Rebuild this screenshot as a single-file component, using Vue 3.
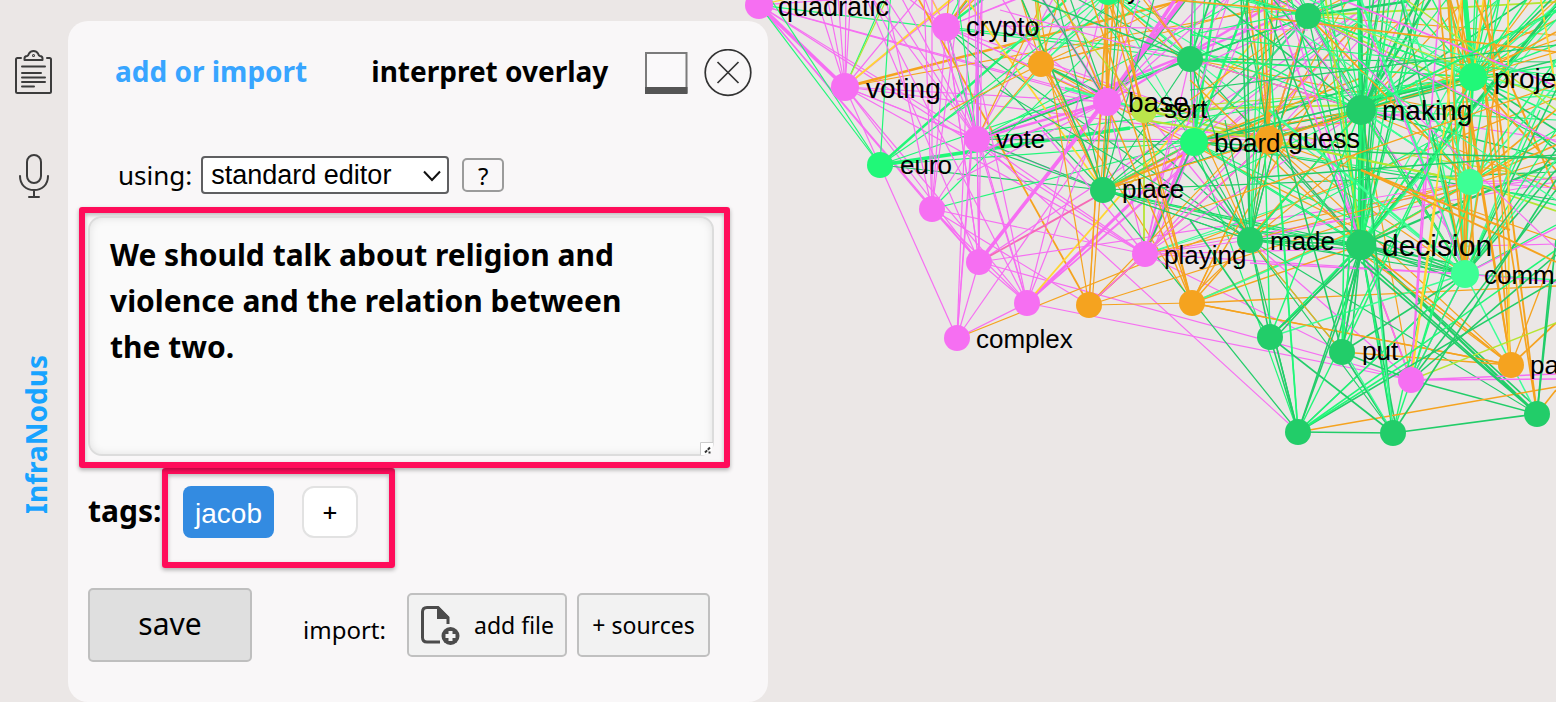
<script setup>
import { ref } from 'vue'

const text = ref('We should talk about religion and violence and the relation between the two.')
const editor = ref('standard editor')

const P = '#f66ff2'
const O = '#f5a31f'
const G = '#22cd69'
const B = '#20f878'
const L = '#3dff95'
const Y = '#ffd633'
const W = '#b5e532'

const nodes = [
  [759, 5, 14, P, 'quadratic', 27, 778, 16],
  [946, 27, 14, P, 'crypto', 27, 966, 36],
  [845, 87, 14, P, 'voting', 28, 866, 98],
  [880, 165, 13, B, 'euro', 26, 900, 174],
  [977, 139, 13, P, 'vote', 26, 996, 148],
  [932, 209, 13, P],
  [979, 262, 13, P],
  [1027, 303, 13, P],
  [957, 338, 13, P, 'complex', 26, 976, 348],
  [1041, 64, 13, O],
  [1108, -8, 13, B, 'y', 26, 1127, -1],
  [1190, 59, 13, G],
  [1144, 110, 13, '#bbe54b', 'sort', 26, 1164, 118],
  [1107, 102, 14, P, 'base', 28, 1128, 112],
  [1269, 140, 14, O, 'guess', 27, 1288, 148],
  [1194, 142, 14, B, 'board', 26, 1214, 152],
  [1103, 190, 13, G, 'place', 26, 1122, 198],
  [1145, 254, 13, P, 'playing', 26, 1164, 264],
  [1089, 305, 13, O],
  [1192, 303, 13, O],
  [1250, 240, 13, G, 'made', 26, 1270, 250],
  [1361, 245, 15, G, 'decision', 30, 1382, 256],
  [1361, 110, 15, G, 'making', 28, 1382, 120],
  [1308, 16, 13, G],
  [1473, 77, 14, B, 'project', 28, 1494, 88],
  [1470, 182, 13, L],
  [1465, 274, 14, L, 'community', 26, 1484, 284],
  [1270, 337, 13, G],
  [1342, 352, 13, G, 'put', 26, 1362, 360],
  [1411, 380, 13, P],
  [1511, 365, 13, O, 'part', 26, 1530, 374],
  [1298, 432, 13, G],
  [1393, 433, 13, G],
  [1537, 414, 13, G],
]

// Each fan: origin x, origin y, colour, stroke width, then the end points.
const fans = [
  [759, 5, P, 3, [845, 87]],
  [759, 5, P, 1, [977, 139, 1107, 102, 1145, 110, 932, 209, 979, 262, 1144, 254, 900, -5]],
  [759, 5, B, 1, [880, 165, 1190, 59]],
  [766, -8, B, 1, [880, 165]],
  [759, 5, Y, 1, [800, -4]],
  [845, 87, P, 1, [816, -4, 827, -4, 838, -4, 846, -4, 851, -4, 925, -10, 958, -4, 1107, 102, 977, 139, 957, 338, 1027, 303, 979, 262, 1269, 140, 1103, 190, 1145, 254]],
  [845, 87, B, 1, [888, -10]],
  [845, 87, W, 1, [891, -10]],
  [845, 87, Y, 1.5, [956, -5]],
  [845, 87, O, 2, [1230, -12]],
  [845, 87, O, 1, [1290, 5]],
  [880, 165, B, 1, [891, -10, 1150, -20, 1190, 59]],
  [880, 165, B, 2, [1066, 0]],
  [880, 165, B, 3, [1130, 128]],
  [880, 165, B, 1, [1473, 77, 1194, 142]],
  [880, 165, G, 1, [1103, 190]],
  [946, 27, P, 1, [900, -8, 930, -5, 976, -5, 1025, -5, 1040, -10, 977, 139, 932, 209, 1107, 102, 1194, 142, 979, 262, 1269, 140]],
  [946, 27, B, 2, [990, -6]],
  [946, 27, B, 1, [1250, 60, 962, -5, 977, 139]],
  [946, 27, G, 1, [1103, 190, 1250, 240, 976, -10]],
  [946, 27, O, 1.5, [974, -10]],
  [946, 27, O, 1, [950, -10, 984, -10]],
  [930, -4, Y, 1, [946, 27]],
  [960, -10, Y, 1.5, [1103, 190]],
  [918, -2, O, 1.5, [1089, 305]],
  [977, 139, P, 1, [870, -5, 884, -5, 900, -5, 924, -4, 978, -5, 1055, -5, 1107, 102, 1298, 432, 932, 209, 979, 262, 1027, 303, 1145, 254, 1360, 140]],
  [977, 139, P, 2, [1361, -15, 1107, 102]],
  [977, 139, G, 1, [1190, 59, 1103, 190, 1194, 142, 1308, 16]],
  [977, 139, B, 1, [957, -5, 1250, -5, 1473, 77]],
  [977, 139, O, 1, [1041, 5, 1041, 64]],
  [978, -5, '#c87bea', 1.5, [978, 126]],
  [932, 209, P, 1, [924, -5, 932, -5, 885, -5, 960, -5, 1027, 303, 1145, 254, 1089, 305, 979, 262]],
  [932, 209, B, 1, [1194, 142, 1140, 1]],
  [979, 262, P, 3, [1190, -8]],
  [979, 262, P, 1, [865, -5, 946, 27, 982, -5, 975, -5, 1411, 380, 1556, 177, 1027, 303, 1361, 10]],
  [979, 262, '#f66ab5', 1.5, [1194, 142]],
  [1027, 303, P, 2.5, [1194, 142]],
  [1027, 303, P, 1, [870, -5, 946, 27, 975, 60, 1105, -5, 1411, 380, 957, 338, 1270, 90, 1107, 102, 1380, -2]],
  [1027, 303, Y, 1.5, [1300, -12]],
  [957, 338, P, 1, [979, 262, 974, 120, 970, -5, 1130, 90, 982, -5]],
  [957, 338, O, 1, [1556, 98]],
  [1041, 64, O, 1, [1020, -5, 1035, -5, 1060, -5, 1107, 102, 1190, -5, 1310, -5, 1103, 190, 1192, 303, 1130, 40, 950, 110, 1269, 140]],
  [1041, 64, W, 1.5, [1037, -5]],
  [1041, 64, G, 2, [1110, 98]],
  [1041, 64, B, 1, [1120, -5]],
  [1041, 64, P, 1, [1000, -5, 1090, -5]],
  [1108, -8, L, 1, [1000, 52, 977, 139, 1107, 102, 1250, 80, 1308, 16, 1194, 142, 1361, 110, 1465, 274]],
  [1108, -8, B, 1, [1190, 59, 945, 120, 1360, 110]],
  [1108, -8, O, 1, [1107, 102, 1145, 110, 1269, 140, 1089, 305]],
  [1107, 102, P, 3, [1185, -5, 1178, -5]],
  [1107, 102, P, 2, [1040, -5, 1280, 0, 979, 152]],
  [1107, 102, P, 1, [1000, 20, 1060, -5, 1140, -5, 1210, -5, 1230, -5, 1145, 254, 1269, 140, 957, 180, 979, 262]],
  [1107, 102, G, 1, [1040, -5, 1103, 190, 1190, -5, 1256, 240, 1069, -5]],
  [1107, 102, O, 1.5, [1105, -5, 1114, -5]],
  [1107, 102, O, 1, [1092, 305, 1000, 54, 1360, 230]],
  [1190, 59, G, 1.5, [1193, -5, 1212, -5]],
  [1190, 59, G, 1, [1070, -5, 1103, 190, 1308, 16, 1361, 110, 1473, 77, 1556, 62, 1250, 240, 1194, 142, 1361, 245]],
  [1190, 59, P, 1, [1145, -5, 1145, 254, 1230, -5]],
  [1190, 59, O, 1, [1140, -5, 1361, 110, 1150, 5, 1473, 115]],
  [1144, 110, W, 1.5, [1144, 250, 1361, 105, 1269, 140]],
  [1144, 110, W, 1, [1050, -5, 1320, 95, 1556, 180]],
  [1144, 110, L, 2, [1065, 88]],
  [1144, 110, P, 1, [1060, 95, 1250, 240]],
  [1194, 142, B, 2, [1216, -5, 1250, -5, 1361, 245]],
  [1194, 142, B, 1, [1195, -5, 1205, -5, 1145, 254, 1308, 16, 1473, 77, 1361, 110, 1298, 432, 1465, 274, 1470, 182, 1100, 15]],
  [1194, 142, G, 1.5, [1361, 110, 1103, 190, 1361, 85, 1308, 16]],
  [1194, 142, G, 1, [1250, 240, 1361, 245, 1145, 254, 1556, 200]],
  [1194, 142, O, 1.5, [1103, 190, 1361, 120, 1361, 78]],
  [1194, 142, P, 2, [1145, 254]],
  [1194, 142, P, 1, [1152, 254, 1361, 10, 1260, -5, 1192, -5, 1430, 110]],
  [1103, 190, G, 1, [1119, -5, 1155, -5, 1361, 110, 1361, 245, 1298, 432, 1556, 172, 1250, 240, 1361, 260, 1465, 274, 1056, -5, 990, 150, 1308, 16]],
  [1103, 190, B, 1, [1194, 142, 1361, 20, 1361, 248]],
  [1103, 190, O, 2, [1269, 118]],
  [1103, 190, O, 1, [1045, 64, 1269, 140, 1124, -5]],
  [1103, 190, Y, 1, [1020, -5]],
  [1145, 254, P, 2.5, [1194, 130]],
  [1145, 254, P, 1, [1173, 120, 1230, -5, 1361, 110, 1465, 274, 1556, 244, 1342, 352, 1361, 20, 1042, 130, 1089, 305, 1556, 182]],
  [1145, 254, G, 1.5, [1194, 142]],
  [1145, 254, L, 1, [1361, 180, 1250, 222]],
  [1145, 254, O, 1, [1470, 182, 1269, 140, 1089, 305]],
  [1089, 305, O, 1, [1037, -5, 1107, -5, 1269, 140, 1556, 158, 1192, 303, 1361, 20]],
  [1089, 305, P, 1, [1269, 140]],
  [1192, 303, O, 1.2, [1107, -5, 1130, 60, 1060, -5, 1090, -5, 1269, 140, 1361, 20, 1361, 245, 1380, 90, 1556, 286, 1511, 365, 1361, 228]],
  [1192, 303, L, 1.5, [1361, 230]],
  [1269, 140, O, 1.5, [1247, -5, 1257, -5, 1264, -5, 1272, -5, 1308, 16, 1361, 110, 1473, 77]],
  [1269, 140, O, 1, [1350, -5, 1430, -5, 1192, 303, 1511, 365, 1465, 274, 1556, 240, 1250, 240, 1361, 245, 1556, 40, 1103, 190]],
  [1269, 140, P, 1, [1308, 16, 1400, -5, 1470, 182, 1361, 245, 1145, 254]],
  [1269, 140, G, 1, [1242, -5, 1361, 245, 1250, 240, 1361, 110]],
  [1269, 140, W, 1.5, [1144, 120, 1470, 182]],
  [1308, 16, G, 2, [1361, -3, 1243, -2, 1410, 1]],
  [1308, 16, G, 1, [1270, -5, 1281, -5, 1298, -5, 1318, -5, 1330, -5, 1361, 110, 1361, 245, 1250, 240, 1473, 77, 1465, 274, 1194, 142, 1556, 145, 1190, 59]],
  [1308, 16, P, 1, [1361, 110, 1194, 142, 1361, -5, 1190, 70]],
  [1308, 16, O, 1, [1269, 140, 1350, -5, 1470, 182, 1556, 35, 1240, -5, 1190, 100]],
  [1308, 16, W, 1.5, [1556, 2, 1470, 90]],
  [1308, 16, B, 1, [1220, -5, 1194, 142, 1361, 90, 1473, 77]],
  [1360, -5, G, 4, [1361, 110]],
  [1361, 110, G, 5, [1361, 245]],
  [1361, 110, B, 2, [1358, -5, 1358, 245, 1473, 77]],
  [1361, 110, G, 2, [1420, -5, 1433, -5]],
  [1361, 110, G, 1.3, [1374, -5, 1380, -5, 1250, 240, 1556, 60, 1556, 160, 1465, 274, 1342, 352, 1270, -5, 1210, -5, 1556, -20]],
  [1361, 110, B, 1, [1320, -5, 1340, -5, 1382, -5, 1400, -5, 1450, -5, 1556, 12, 1470, 182, 1393, 433, 1194, 190, 1194, 50, 1556, 120, 1504, -5]],
  [1361, 110, L, 1.2, [1465, 274, 1470, 182, 1300, -5, 1556, 95]],
  [1361, 110, O, 1, [1556, 190, 1465, 274, 1470, -5, 1250, 130, 1411, 380, 1556, 20]],
  [1361, 110, P, 1, [1556, 140, 1411, -5, 1470, 260, 1190, 59]],
  [1361, 245, G, 2.5, [1430, 160, 1560, 0]],
  [1361, 245, G, 2, [1537, 414, 1556, 162]],
  [1361, 245, G, 1.3, [1373, 80, 1385, -5, 1420, -5, 1260, -5, 1270, 337, 1276, 337, 1342, 352, 1350, 352, 1335, 352, 1298, 432, 1393, 433, 1397, 433, 1537, 408, 1465, 274, 1465, 266, 1465, 282, 1250, 240, 1250, 230]],
  [1361, 245, B, 1.2, [1320, -5, 1330, -5, 1341, 80, 1370, -5, 1390, -5, 1405, -5, 1425, -5, 1473, 77, 1290, -5, 1470, 182, 1270, 337, 1394, 433]],
  [1361, 245, L, 1, [1500, -5, 1556, 20, 1194, 142]],
  [1361, 245, O, 1.2, [1411, 380, 1470, 182, 1556, 135, 1511, 365, 1190, 80]],
  [1361, 245, P, 1.5, [1411, 380, 1276, 10]],
  [1361, 245, P, 1, [1285, -5]],
  [1361, 245, W, 1.5, [1325, -5]],
  [1250, 240, G, 1.3, [1241, -5, 1247, -5, 1270, 337, 1361, 230, 1190, 150]],
  [1250, 240, G, 1, [1225, 120, 1280, -5, 1298, 432, 1361, 250, 1465, 274, 1537, 414, 1393, 433, 1103, 190, 1308, 16, 1190, 59]],
  [1250, 240, B, 1, [1260, -5, 1268, -5, 1342, 352, 1361, 110, 1470, 120]],
  [1250, 240, O, 1, [1342, 352, 1185, 303, 1361, 150, 1200, 130, 1470, 182]],
  [1250, 240, P, 1, [1411, 380, 1361, 216, 1145, 254]],
  [1473, 77, B, 4, [1464, -5]],
  [1473, 77, B, 2, [1361, 100, 1466, -5]],
  [1473, 77, B, 1.2, [1430, -5, 1445, -5, 1478, -5, 1490, -5, 1500, -5, 1512, -5, 1530, -5, 1550, -5, 1556, 20, 1556, 45, 1556, 66, 1298, 432, 1400, -5, 1194, 60, 1556, 115, 1470, 182, 1361, 245, 1308, 16, 1393, 433]],
  [1473, 77, G, 1.4, [1194, 142, 1361, 110, 1556, 130, 1556, 150, 1556, -5]],
  [1473, 77, L, 1.2, [1380, 20, 1556, 5, 1465, 274, 1300, -5, 1556, 92]],
  [1473, 77, O, 1.4, [1449, -5, 1456, -5, 1485, -5, 1556, 32, 1556, 170]],
  [1473, 77, O, 1, [1269, 140, 1556, 0, 1535, -5, 1465, 274, 1556, 52]],
  [1473, 77, Y, 1.5, [1484, -5, 1462, 274]],
  [1448, -5, O, 2, [1465, 274]],
  [1473, -5, O, 1.6, [1556, 190]],
  [1484, -5, O, 1.6, [1537, 414]],
  [1470, 182, L, 1.4, [1400, -5, 1430, 110, 1556, 85, 1465, 274, 1361, 110]],
  [1470, 182, B, 1.2, [1473, 77, 1500, -5, 1556, 60, 1556, 130, 1361, 60, 1556, 205, 1411, 380, 1361, 245]],
  [1470, 182, O, 1.4, [1462, 110, 1556, 110, 1475, 274, 1308, 16, 1556, 145]],
  [1470, 182, P, 1, [1361, 200, 1556, 179, 1556, 188]],
  [1470, 182, W, 1.5, [1556, 211, 1269, 140]],
  [1470, 182, Y, 1.5, [1471, 90]],
  [1465, 274, L, 2, [1269, 110, 1361, 0]],
  [1465, 274, L, 1.3, [1416, 80, 1435, 130, 1450, -5, 1490, 110, 1556, 60, 1556, 160, 1270, 337, 1537, 414, 1556, 280]],
  [1465, 274, G, 1.3, [1361, 235, 1556, 170, 1342, 352, 1298, 432, 1556, 90, 1400, -5]],
  [1465, 274, B, 1.1, [1298, 432, 1411, 380, 1361, 110, 1556, 130, 1475, -5, 1540, 110, 1556, 225]],
  [1465, 274, O, 1.4, [1439, -5, 1445, 180, 1495, 90, 1462, -5, 1470, 110]],
  [1465, 274, P, 1.2, [1411, 380, 1556, 228, 1361, 10, 1250, 263, 1556, 282]],
  [1511, 365, O, 1.5, [1470, 110, 1484, 80, 1449, -5, 1556, 323]],
  [1511, 365, O, 1.1, [1490, -5, 1361, 253, 1342, 352, 1556, 248, 1375, 256, 1192, 303]],
  [1508, -5, Y, 1.5, [1509, 365]],
  [1540, -5, Y, 1.5, [1556, 90]],
  [1411, 380, P, 1.3, [1424, 180, 1440, -5, 1556, 374, 1556, 379]],
  [1411, 380, Y, 1.5, [1436, 200, 1462, -5]],
  [1411, 380, W, 1.2, [1556, 323]],
  [1411, 380, G, 1.3, [1556, 255, 1537, 414, 1342, 352, 1556, 190]],
  [1411, 380, B, 1.2, [1393, 433, 1475, 180, 1465, 274]],
  [1298, 432, G, 1.3, [1270, 337, 1274, 337, 1393, 433, 1556, 280, 1361, 258]],
  [1298, 432, B, 1.3, [1281, 200, 1265, -5, 1411, 360, 1556, 250]],
  [1298, 432, O, 1.2, [1556, 387]],
  [1393, 433, G, 1.4, [1537, 414, 1342, 352, 1270, 337, 1556, 180, 1361, 90]],
  [1393, 433, L, 1.2, [1345, 352, 1374, 258]],
  [1537, 414, G, 1.4, [1550, 280, 1556, 240, 1361, 262, 1342, 240]],
  [1537, 414, O, 1.4, [1484, 80, 1556, 390]],
  [1270, 337, G, 1.4, [1361, 252, 1190, 220]],
  [1270, 337, B, 1.2, [1361, 110, 1265, 150]],
  [1342, 352, G, 1.3, [1276, 110, 1361, 250]],
  [1342, 352, B, 1.3, [1345, 180, 1473, 77, 1361, 110]],
  // long edges that cross the upper right of the canvas
  [1330, -5, P, 1.5, [1556, 86]],
  [1290, -5, P, 1, [1556, 248]],
  [1276, 0, P, 1, [1361, 110, 1556, 142]],
  [1250, 0, L, 1, [1556, 200, 1556, 80]],
  [1190, 35, B, 1, [1556, 75, 1430, -15]],
  [1190, 90, G, 1, [1556, 45]],
  [1361, 152, G, 1.2, [1556, 158, 1194, 142]],
  [1250, 178, G, 1.2, [1556, 155]],
  [1194, 210, O, 1, [1556, 85]],
  [1269, 18, O, 1.4, [1556, 52]],
  [1361, 170, O, 1.6, [1510, 230, 1556, 262]],
  [1400, -5, W, 1.2, [1556, 110]],
  [1556, 100, W, 1, [1361, 30]],
  [1556, 10, B, 1.2, [1361, 110, 1361, 245]],
  [1556, 150, G, 1.2, [1465, 274]],
  [1120, -5, O, 1.4, [1308, 12, 1145, 130]],
  [1020, -5, G, 1.3, [1103, 190, 1190, 59]],
  [1000, 10, P, 1, [1190, 62]],
  [1000, 26, P, 1, [1308, 30]],
  [1000, 90, G, 1, [1250, 240]],
]

const edges = fans.flatMap(([x, y, color, width, ends]) => {
  const out = []
  for (let i = 0; i < ends.length; i += 2) {
    out.push({ x1: x, y1: y, x2: ends[i], y2: ends[i + 1], color, width: width * 1.2 })
  }
  return out
})
</script>

<template>
  <div class="page">
    <svg class="graph" aria-hidden="true">
      <line v-for="(e, i) in edges" :key="'e' + i" :x1="e.x1" :y1="e.y1" :x2="e.x2" :y2="e.y2" :stroke="e.color" :stroke-width="e.width" />
      <circle v-for="(n, i) in nodes" :key="'n' + i" :cx="n[0]" :cy="n[1]" :r="n[2]" :fill="n[3]" />
      <template v-for="(n, i) in nodes" :key="'t' + i">
        <text v-if="n[4]" :x="n[6]" :y="n[7]" :font-size="n[5]">{{ n[4] }}</text>
      </template>
    </svg>

    <aside class="rail">
      <button class="icon-btn" aria-label="Notes">
        <svg width="38" height="46" viewBox="0 0 38 46" fill="none" stroke="#3c3c3c" stroke-width="2" stroke-linecap="round" stroke-linejoin="round">
          <path d="M6 8H2.500Q1 8 1 9.500V41.500Q1 43 2.500 43H34.500Q36 43 36 41.500V9.500Q36 8 34.500 8H32" />
          <path d="M9.500 10V8.500Q9.500 6 12 6Q13.500 5.500 14 3.500Q15.500 1 18.500 1T23 3.500Q23.500 5.500 25 6Q27.500 6 27.500 8.500V10Z" />
          <circle cx="18.500" cy="5.500" r="0.500" />
          <path d="M7 16.500H30M7 23H26M7 27.500H30M7 32H30M7 36.500H19" />
        </svg>
      </button>
      <button class="icon-btn mic" aria-label="Dictate">
        <svg width="32" height="46" viewBox="0 0 32 46" fill="none" stroke="#3c3c3c" stroke-width="2" stroke-linecap="round">
          <rect x="9" y="2" width="14" height="28" rx="7" />
          <path d="M2 23C2 32 8 37 16 37S30 32 30 23M16 37V44M11 44H21" />
        </svg>
      </button>
      <a class="brand" href="#">InfraNodus</a>
    </aside>

    <main class="panel">
      <header class="head">
        <nav class="tabs">
          <a class="tab active" href="#">add or import</a>
          <a class="tab" href="#">interpret overlay</a>
        </nav>
        <div class="window-btns">
          <button class="icon-btn" aria-label="Minimize">
            <svg width="44" height="44" viewBox="0 0 44 44">
              <rect x="2" y="2" width="40.500" height="39" fill="#faf9fa" stroke="#7b7b7b" stroke-width="2" />
              <rect x="1" y="36" width="42.500" height="7" fill="#555" />
            </svg>
          </button>
          <button class="icon-btn" aria-label="Close">
            <svg width="48" height="48" viewBox="0 0 48 48" fill="none" stroke="#333" stroke-width="1.700">
              <circle cx="24" cy="23.500" r="22.800" />
              <path d="M13.500 13L34.500 34M34.500 13L13.500 34" />
            </svg>
          </button>
        </div>
      </header>

      <div class="using">
        <label for="editor">using:</label>
        <span class="select-wrap">
          <select id="editor" v-model="editor">
            <option>standard editor</option>
          </select>
          <svg class="chevron" width="20" height="14" viewBox="0 0 20 14" fill="none" stroke="#111" stroke-width="2">
            <path d="M2 2.500L10 11L18 2.500" />
          </svg>
        </span>
        <button class="help">?</button>
      </div>

      <div class="frame editor-frame">
        <textarea v-model="text" aria-label="Statement"></textarea>
        <svg class="grip" width="13" height="13" viewBox="0 0 13 13">
          <path d="M0 0H13V3Q13 12 4 13H0Z" fill="#fff" />
          <path d="M0.500 13V0.500H13" fill="none" stroke="#ccc" />
          <path d="M5 10.500L10 5.500M8.500 10.500H10.500" stroke="#333" stroke-width="2" stroke-dasharray="3 1" />
        </svg>
      </div>

      <div class="tags">
        <span class="tags-label">tags:</span>
        <div class="frame tags-frame">
          <button class="tag">jacob</button>
          <button class="tag-add" aria-label="Add tag">+</button>
        </div>
      </div>

      <div class="actions">
        <button class="save">save</button>
        <span class="import-label">import:</span>
        <button class="act file">
          <svg width="40" height="40" viewBox="0 0 40 40" fill="none" stroke="#4b4b4b" stroke-width="3">
            <path d="M20 37H7Q2.500 37 2.500 32.500V7Q2.500 2.500 7 2.500H18L28 12.500V19" />
            <path d="M17 2H19L29 12V14H17Z" fill="#4b4b4b" stroke="none" />
            <circle cx="30.500" cy="31" r="9" fill="#4b4b4b" stroke="none" />
            <path d="M30.500 26V36M25.500 31H35.500" stroke="#f2f2f2" stroke-width="4" />
          </svg>
          add file
        </button>
        <button class="act sources">+ sources</button>
      </div>
    </main>
  </div>
</template>

<style>
body {
  background: #ebe7e6;
}
</style>

<style scoped>
.page {
  position: relative;
  display: flex;
  min-height: 100vh;
  overflow: hidden;
  background: #ebe7e6;
  color: #000;
  font-family: "Noto Sans", "Open Sans", sans-serif;
}
.page * {
  box-sizing: border-box;
}
.graph {
  position: absolute;
  inset: 0;
  width: 100%;
  height: 100%;
}
.graph text {
  font-family: "Liberation Sans", Arial, sans-serif;
  fill: #000;
}
button {
  margin: 0;
  padding: 0;
  color: inherit;
  font-family: inherit;
}
a {
  color: inherit;
  text-decoration: none;
}
.icon-btn {
  display: flex;
  border: 0;
  background: none;
}
.rail {
  position: relative;
  display: flex;
  flex: none;
  flex-direction: column;
  align-items: center;
  width: 68px;
  padding-top: 50px;
}
.rail .mic {
  margin-top: 57px;
}
.brand {
  margin-top: 156px;
  margin-left: 4px;
  color: #18a3ff;
  font-size: 28px;
  font-weight: 700;
  line-height: 40px;
  writing-mode: vertical-rl;
  transform: rotate(180deg);
}
.panel {
  position: relative;
  flex: none;
  width: 700px;
  margin-top: 21px;
  padding-bottom: 40px;
  align-self: flex-start;
  border-radius: 20px;
  background: #f9f7f8;
}
.head {
  display: flex;
  align-items: center;
  justify-content: space-between;
  padding: 28px 16px 0 47px;
}
.tabs {
  display: flex;
  gap: 64px;
  padding-bottom: 4px;
}
.tab {
  font-size: 28px;
  font-weight: 700;
  line-height: 44px;
  white-space: nowrap;
}
.active {
  color: #38a5ff;
}
.window-btns {
  display: flex;
  align-items: center;
  gap: 16px;
}
.using {
  display: flex;
  align-items: center;
  margin-top: 59px;
  padding-left: 50px;
  font-size: 26px;
  line-height: 38px;
}
.select-wrap {
  position: relative;
  display: flex;
  width: 248px;
  margin: 0 13px 0 9px;
}
select {
  width: 100%;
  height: 38px;
  padding: 0 8px;
  border: 2px solid #5f5f61;
  border-radius: 4px;
  background: #fff;
  color: #000;
  font-family: "Liberation Sans", Arial, sans-serif;
  font-size: 27px;
  appearance: none;
}
.chevron {
  position: absolute;
  top: 13px;
  right: 7px;
  pointer-events: none;
}
.help {
  width: 42px;
  height: 34px;
  padding-top: 2px;
  border: 2px solid #9b9b9b;
  border-radius: 5px;
  background: #f9f7f8;
  font-size: 24px;
  line-height: 28px;
}
.frame {
  border: 6px solid #ff0c5a;
  border-radius: 3px;
  box-shadow: 0 2px 4px rgba(0, 0, 0, 0.3), inset 0 2px 4px rgba(0, 0, 0, 0.25);
}
.editor-frame {
  position: relative;
  display: flex;
  margin: 13px 38px 0 11px;
  padding: 3px 10px 6px 3px;
}
textarea {
  display: block;
  flex: 1;
  height: 240px;
  padding: 14px 60px 14px 20px;
  border: 2px solid #dcdcdc;
  border-radius: 14px;
  background: #fafafa;
  box-shadow: inset 0 0 8px rgba(0, 0, 0, 0.1);
  color: #000;
  font-family: inherit;
  font-size: 30px;
  font-weight: 700;
  line-height: 46px;
  resize: none;
}
.grip {
  position: absolute;
  right: 11px;
  bottom: 7px;
}
.tags {
  display: flex;
  padding-left: 20px;
}
.tags-label {
  width: 74px;
  font-size: 30px;
  font-weight: 700;
  line-height: 86px;
}
.tags-frame {
  display: flex;
  gap: 28px;
  width: 233px;
  height: 100px;
  padding: 12px 15px;
}
.tag {
  width: 91px;
  height: 52px;
  padding-top: 4px;
  border: 0;
  border-radius: 8px;
  background: #338be1;
  color: #fff;
  font-family: "Liberation Sans", Arial, sans-serif;
  font-size: 28px;
}
.tag-add {
  width: 56px;
  height: 52px;
  border: 2px solid #e2e2e2;
  border-radius: 12px;
  background: #fff;
  font-size: 26px;
  font-weight: 500;
  line-height: 40px;
}
.actions {
  display: flex;
  align-items: center;
  margin-top: 20px;
  padding-left: 20px;
}
.save {
  width: 164px;
  height: 74px;
  padding-bottom: 4px;
  border: 2px solid #bfbfbf;
  border-radius: 5px;
  background: #dfdfdf;
  font-size: 30px;
}
.import-label {
  width: 104px;
  margin-left: 51px;
  padding-top: 8px;
  font-size: 24px;
}
.act {
  display: flex;
  align-items: center;
  justify-content: center;
  height: 64px;
  border: 2px solid #c0c0c0;
  border-radius: 5px;
  background: #f2f2f2;
  font-size: 23px;
  white-space: nowrap;
}
.file {
  gap: 14px;
  width: 160px;
}
.sources {
  width: 133px;
  margin-left: 10px;
}
</style>
